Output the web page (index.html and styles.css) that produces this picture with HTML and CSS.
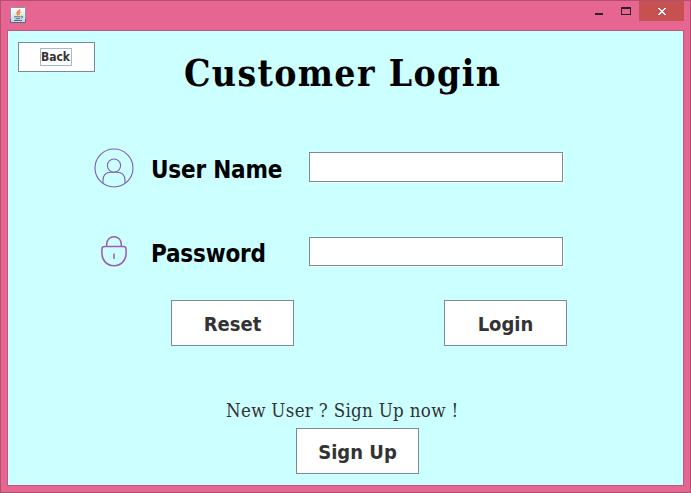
FILE: index.html
```html
<!DOCTYPE html>
<html lang="en">
<head>
<meta charset="utf-8">
<title>Customer Login</title>
<link rel="stylesheet" href="styles.css">
</head>
<body>
<div class="window">
  <div class="titlebar">
    <svg class="java" width="16" height="16" viewBox="0 0 16 16">
      <defs><linearGradient id="g" x2="0" y2="1"><stop stop-color="#fff"/><stop offset="1" stop-color="#c9d3da"/></linearGradient></defs>
      <rect x=".5" y=".5" width="15" height="15" rx="1" fill="url(#g)" stroke="#8a97a3"/>
      <path d="M.5 12v3.5h15V12" fill="none" stroke="#526b80"/>
      <path d="M10 2.500C10 4 6.500 4.500 7 6.500L8 8.500M10.500 5C8.500 5.500 8.500 6.500 9.500 8" fill="none" stroke="#e87b1c" stroke-width="1.300"/>
      <path d="M4 9.800h6.500M5.500 11.700h4.500M4 13.500h8M11 9.300c2.500-.6 2 1.700 0 2" fill="none" stroke="#49708f"/>
    </svg>
    <svg class="controls" width="99" height="20" viewBox="0 0 99 20" shape-rendering="crispEdges">
      <path fill="#2a2228" d="M3 12h8v2H3z"/>
      <path fill="#2a2228" fill-rule="evenodd" d="M29 6h10v8H29zM30 8v5h8V8z"/>
      <path fill="#c75050" d="M47 0h45v20H47z"/>
      <path fill="#fff" d="M66 7h2v1h1v1h2V8h1V7h2v1h-1v1h-1v1h-1v1h1v1h1v1h1v1h-2v-1h-1v-1h-2v1h-1v1h-2v-1h1v-1h1v-1h1v-1h-1V9h-1V8h-1z"/>
    </svg>
  </div>
  <main class="pane">
    <header class="header">
      <button class="button back"><span>Back</span></button>
      <h1 class="title">Customer Login</h1>
    </header>
    <form class="form">
      <div class="row">
        <svg class="icon" width="40" height="40" viewBox="0 0 40 40" fill="none" stroke="#7d5fb2" stroke-width="1.100">
          <circle cx="20" cy="20" r="19"/>
          <circle cx="20" cy="17.600" r="6.600"/>
          <path d="M9 35v-2.500Q9 24.300 17 24.300h6q8 0 8 8.200V35"/>
        </svg>
        <label class="label user" for="u">User Name</label>
        <input class="field" id="u" type="text">
      </div>
      <div class="row second">
        <svg class="icon" width="40" height="40" viewBox="0 0 40 40" fill="none" stroke="#a15ab5" stroke-width="1.500">
          <path d="M12.700 15.500V13a7.300 7.300 0 0 1 14.600 0v2.500M10.500 15.500h19q2.600 0 2.600 2.800V22c0 8-5.500 12.700-12.100 12.700S7.900 30 7.900 22v-3.700q0-2.800 2.600-2.800zM20 22.500v5.500"/>
        </svg>
        <label class="label pass" for="p">Password</label>
        <input class="field short" id="p" type="password">
      </div>
      <div class="actions">
        <button class="button large reset" type="reset"><span>Reset</span></button>
        <button class="button large login" type="button"><span>Login</span></button>
      </div>
    </form>
    <footer class="signup">
      <p class="hint">New User ? Sign Up now !</p>
      <button class="button large up"><span>Sign Up</span></button>
    </footer>
  </main>
</div>
</body>
</html>
```
FILE: styles.css
```css
* { box-sizing: border-box; }
body { margin: 0; }
.window {
  width: 691px; height: 493px;
  padding: 0 6px 6px;
  background: #e66691;
  border: 1px solid #b25072;
  overflow: hidden;
}
.titlebar { display: flex; justify-content: space-between; height: 29px; padding-left: 3px; }
.java { margin-top: 6px; }
.controls { margin-right: -7px; }
.pane {
  width: 677px; height: 456px;
  background: #ccffff;
  border: 1px solid #b75a7c;
}
.header { display: flex; height: 117px; padding: 11px 0 0 10px; }
.title {
  margin: 4px 0 0 89px;
  font: bold 37px/54px "DejaVu Serif", serif;
  font-stretch: condensed;
  letter-spacing: 1.35px;
  white-space: nowrap;
  color: #000;
}
.button {
  padding: 0;
  background: #fff;
  border: 1px solid #7a8a99;
  color: #333;
  font-family: "DejaVu Sans Condensed", "DejaVu Sans", sans-serif;
  font-weight: bold;
  font-stretch: condensed;
  white-space: nowrap;
}
.back { width: 77px; height: 30px; padding-right: 2px; font-size: 12px; }
.back span { display: inline-block; width: 32px; height: 18px; line-height: 17px; border: 1px solid #a3b8cc; }
.row { display: flex; height: 40px; padding-left: 86px; }
.second { margin-top: 43px; }
.label {
  width: 158px; margin-left: 17px;
  font: bold 24px/44px "DejaVu Sans Condensed", "DejaVu Sans", sans-serif;
  font-stretch: condensed;
  letter-spacing: -0.2px;
  white-space: nowrap;
  color: #000;
}
.pass { line-height: 46px; }
.field {
  width: 254px; height: 30px; margin-top: 4px;
  background: #fff;
  border: 1px solid #7a8a99;
  border-radius: 0;
  box-shadow: 1px 1px #fff;
  outline: 0;
}
.short { height: 29px; margin-top: 6px; }
.actions { display: flex; gap: 150px; margin: 29px 0 0 163px; }
.large { width: 123px; height: 46px; padding-top: 2px; font-size: 20px; }
.signup { display: flex; flex-direction: column; padding: 51px 0 0 218px; }
.hint { margin: 0; font: 18.6px/27px "DejaVu Serif", serif; font-stretch: condensed; letter-spacing: 0.3px; color: #333; white-space: nowrap; }
.up { margin: 4px 0 0 70px; }
```
